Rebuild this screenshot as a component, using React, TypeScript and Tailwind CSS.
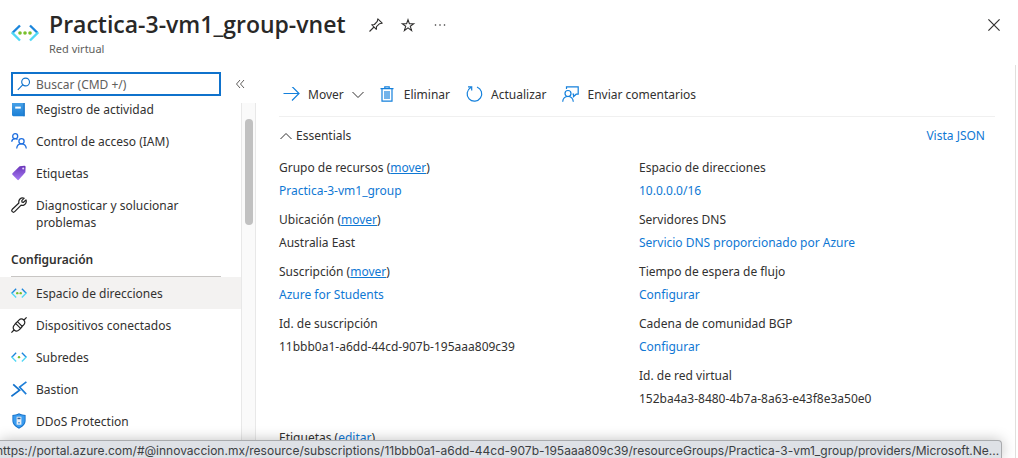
import React from "react";

type IconProps = { className?: string };

function VnetIcon({ className = "", dots = 3 }: IconProps & { dots?: number }) {
  const centres = dots === 3 ? [9, 14, 19] : dots === 2 ? [11, 17] : [14];
  return (
    <svg className={className} viewBox="0 0 28 18" fill="none" strokeWidth="2.4" aria-hidden="true">
      <path d="M9 1.5 1.300 9" stroke="#1b86dc" />
      <path d="m.8 8.400 8.200 8.100" stroke="#50d8f5" />
      <path d="M19 1.500 26.700 9" stroke="#1b86dc" />
      <path d="m27.200 8.400-8.200 8.100" stroke="#50d8f5" />
      {centres.map((cx) => (
        <circle key={cx} cx={cx} cy="9" r={dots === 3 ? 1.8 : 2.1} fill="#78c02c" />
      ))}
    </svg>
  );
}

function BookIcon() {
  return (
    <svg className="size-4" viewBox="0 0 16 16" aria-hidden="true">
      <defs>
        <linearGradient id="book" x1="0" y1="0" x2="0" y2="1">
          <stop offset="0" stopColor="#4aa3e8" />
          <stop offset="1" stopColor="#1b7fd6" />
        </linearGradient>
      </defs>
      <path d="M1 1h12.500v14.200H2.400A1.400 1.400 0 0 1 1 13.800z" fill="url(#book)" />
      <path d="M12.400 1h1.400v14.200h-1.400z" fill="#1f78c8" />
      <path d="M4.200 5.600h5.600v2H4.200z" fill="#fff" />
    </svg>
  );
}

function PeopleIcon() {
  return (
    <svg className="size-4" viewBox="0 0 16 16" fill="none" stroke="#1f6fe0" strokeWidth="1.3" aria-hidden="true">
      <circle cx="4.2" cy="3.200" r="2.500" />
      <path d="M.7 8.800C.9 7 2.300 5.700 4.200 5.700c.9 0 1.700.300 2.300.8" />
      <circle cx="10.500" cy="8.200" r="2.600" />
      <path d="M5.700 15.500c.200-2.800 2-4.700 4.700-4.700s4.600 1.900 4.900 4.700" />
    </svg>
  );
}

function TagIcon() {
  return (
    <svg className="size-4" viewBox="0 0 16 16" aria-hidden="true">
      <defs>
        <linearGradient id="tag" x1="0" y1="0" x2="0" y2="1">
          <stop offset="0" stopColor="#6a35b8" />
          <stop offset="1" stopColor="#a67af4" />
        </linearGradient>
      </defs>
      <path d="M8.600 1.200 13.400.800q1.200 0 1.200 1.200l-.200 5.200-6.600 7.600q-.700.700-1.400 0L1.500 9.700q-.600-.700 0-1.400z" fill="url(#tag)" />
      <circle cx="12.200" cy="3.400" r="1" fill="#e6d8fb" />
    </svg>
  );
}

function WrenchIcon() {
  return (
    <svg className="size-4" viewBox="0 0 16 16" fill="none" stroke="#222" strokeWidth="1.200" strokeLinejoin="round" aria-hidden="true">
      <path d="M13.200 1.200 10.800 3.600l.200 1.500 1.500.200 2.500-2.400c.8 2.300-.4 4.800-2.700 5.400-.800.200-1.500.100-2.200-.100L3.700 14.700c-.7.700-1.700.7-2.400 0s-.7-1.700 0-2.400l6.600-6.300c-.7-2.900 1.800-6.200 5.300-4.800z" />
    </svg>
  );
}

function PlugIcon() {
  return (
    <svg className="size-4" viewBox="0 0 16 16" fill="none" stroke="#222" strokeWidth="1.200" aria-hidden="true">
      <path d="M.4 15.600 3 13M13 3 15.600.4M4.600 6.400l5 5-1.500 1.500c-1.400 1.400-3.500 1.500-4.900.1s-1.300-3.500.1-4.900zM6.400 4.600l1.500-1.500c1.400-1.400 3.500-1.500 4.900-.1s1.300 3.500-.1 4.900l-1.500 1.500zM4.600 6.400l1.800-1.800M9.600 11.400l1.600-1.900" />
    </svg>
  );
}

function BastionIcon() {
  return (
    <svg className="size-4" viewBox="0 0 16 16" fill="none" aria-hidden="true">
      <path d="M.4 15.200 8.600 9.200 2.200 3.400" stroke="#1272cc" strokeWidth="1.700" />
      <path d="M15.400.9 8.600 6.200l6.600 7" stroke="#1f7fd8" strokeWidth="1.700" />
    </svg>
  );
}

function ShieldIcon() {
  return (
    <svg className="size-4" viewBox="0 0 16 16" aria-hidden="true">
      <path d="M8 .3c2.300 1.500 4.300 1.300 6.600 1.600v5.600c0 4-3.300 6.500-6.600 8.200C4.700 14 1.400 11.500 1.400 7.500V1.900C3.700 1.600 5.700 1.800 8 .3z" fill="#1671c8" />
      <path d="M8 1.300c2 1.200 3.700 1.200 5.700 1.400v4.800c0 3.400-2.800 5.600-5.700 7.100-2.900-1.500-5.700-3.700-5.700-7.100V2.700C4.300 2.500 6 2.500 8 1.300z" fill="#3a9cf0" />
      <path d="M5.600 3.700h4.800v8H5.600z" fill="#e8eef5" />
      <path d="M6.500 4.700h3v1.500h-3z" fill="#335f91" />
      <path d="M7.300 9h1.400v1.500H7.300z" fill="#3a8ada" />
    </svg>
  );
}

function Chevron({ up = false }: { up?: boolean }) {
  return (
    <svg className="h-2 w-3 shrink-0" viewBox="0 0 12 8" fill="none" stroke="#323130" strokeWidth="1" aria-hidden="true">
      <path d={up ? "M.500 7 6 1.500 11.500 7" : "M.500 1 6 6.500 11.500 1"} />
    </svg>
  );
}

function NavItem({ icon, label, active = false }: { icon: React.ReactNode; label: string; active?: boolean }) {
  return (
    <a
      href="#"
      aria-current={active ? "page" : undefined}
      className={`flex min-h-8 items-start pt-2 pr-12 pb-1 pl-[11px] leading-[17px] ${active ? "bg-[#f3f2f1]" : ""}`}
    >
      <span className="mr-[9px] flex size-4 shrink-0 items-center justify-center">{icon}</span>
      <span>{label}</span>
    </a>
  );
}

function Field({ label, action, value, plain = false }: { label: string; action?: string; value: string; plain?: boolean }) {
  return (
    <div className="mb-1.5 leading-[23px]">
      <dt>
        {label}
        {action && (
          <>
            {" ("}
            <a href="#" className="text-[#0f78d4] underline">
              {action}
            </a>
            )
          </>
        )}
      </dt>
      <dd>
        {plain ? value : <a href="#" className="text-[#0f78d4]">{value}</a>}
      </dd>
    </div>
  );
}

export default function App() {
  return (
    <div className="relative flex h-screen flex-col overflow-hidden bg-white font-['Noto_Sans',sans-serif] text-[12px] text-[#323130]">
      <header className="flex h-[65px] shrink-0 items-start pt-2 pl-[11px]">
        <VnetIcon className="mt-4 h-[18px] w-7 shrink-0" />
        <div className="ml-2.5">
          <h1 className="font-['Open_Sans',sans-serif] text-[23px] leading-8 font-semibold whitespace-nowrap text-[#292827]">Practica-3-vm1_group-vnet</h1>
          <p className="text-[11px] leading-[18px] text-[#605e5c]">Red virtual</p>
        </div>
        <div className="mt-[9px] ml-[22px] flex items-center gap-4">
          <button aria-label="Anclar" className="size-4">
            <svg className="size-4" viewBox="0 0 16 16" fill="none" stroke="#323130" strokeWidth="1.100" strokeLinejoin="round" aria-hidden="true">
              <path d="M1.500 14.500 6 10M3.700 7.700 8.300 12.300 8.500 9.600 11.600 6.700 14.200 6.200 9.800 1.800 9.300 4.400 6.400 7.500z" />
            </svg>
          </button>
          <button aria-label="Favorito" className="size-4">
            <svg className="size-4" viewBox="0 0 16 16" fill="none" stroke="#323130" strokeWidth="1.100" aria-hidden="true">
              <path d="m8 2.700 1.400 4h4.300l-3.400 2.600 1.300 4.200L8 10.900l-3.600 2.600 1.300-4.200-3.400-2.600h4.300z" />
            </svg>
          </button>
          <button aria-label="Más" className="size-4">
            <svg className="size-4" viewBox="0 0 16 16" fill="#323130" aria-hidden="true">
              <circle cx="3.500" cy="8" r=".8" />
              <circle cx="8" cy="8" r=".8" />
              <circle cx="12.500" cy="8" r=".8" />
            </svg>
          </button>
        </div>
        <button aria-label="Cerrar" className="mt-[11px] mr-[18px] ml-auto size-3">
          <svg className="size-3" viewBox="0 0 12 12" stroke="#323130" strokeWidth="1.200" aria-hidden="true">
            <path d="m.4.4 11.200 11.200M11.600.4.4 11.600" />
          </svg>
        </button>
      </header>

      <div className="flex min-h-0 flex-1">
        <aside className="flex w-64 shrink-0 flex-col">
          <div className="flex items-center pt-[7px] pb-[7px] pl-[11px]">
            <label className="flex h-6 w-[210px] items-center border-2 border-[#0f72cc] pl-1">
              <svg className="mr-[5px] size-3.5 shrink-0" viewBox="0 0 14 14" fill="none" stroke="#0f72cc" strokeWidth="1.100" aria-hidden="true">
                <circle cx="8.600" cy="5" r="3.900" />
                <path d="M5.700 7.900.800 12.800" />
              </svg>
              <input aria-label="Buscar" placeholder="Buscar (CMD +/)" className="w-full min-w-0 pt-px outline-none placeholder:text-[#605e5c]" />
            </label>
            <button aria-label="Contraer menú" className="ml-3.5 h-3 w-3">
              <svg className="h-3 w-3" viewBox="0 0 12 12" fill="none" stroke="#605e5c" strokeWidth="1" aria-hidden="true">
                <path d="M5 2 1.500 6 5 10M9 2 5.500 6 9 10" />
              </svg>
            </button>
          </div>
          <div className="flex min-h-0 flex-1">
            <nav className="min-w-0 flex-1 overflow-hidden">
              <div className="-mt-2.5">
                <NavItem icon={<BookIcon />} label="Registro de actividad" />
                <NavItem icon={<PeopleIcon />} label="Control de acceso (IAM)" />
                <NavItem icon={<TagIcon />} label="Etiquetas" />
                <NavItem icon={<WrenchIcon />} label="Diagnosticar y solucionar problemas" />
                <h2 className="mt-2 mr-5 ml-[11px] border-b border-[#c8c6c4] pt-2 pb-2 leading-[17px] font-semibold">Configuración</h2>
                <NavItem icon={<VnetIcon dots={2} className="w-4" />} label="Espacio de direcciones" active />
                <NavItem icon={<PlugIcon />} label="Dispositivos conectados" />
                <NavItem icon={<VnetIcon dots={1} className="w-4" />} label="Subredes" />
                <NavItem icon={<BastionIcon />} label="Bastion" />
                <NavItem icon={<ShieldIcon />} label="DDoS Protection" />
              </div>
            </nav>
            <div className="w-[15px] shrink-0 border-x border-[#e8e8e8] bg-[#fafafa] px-[3px] pt-4">
              <div className="h-[106px] w-2 rounded-full bg-[#c1c1c1]" />
            </div>
          </div>
        </aside>

        <main className="mr-0.5 min-w-0 flex-1 border-r border-[#e1dfdd] pl-[23px]">
          <div className="mr-5 flex h-[52px] items-center border-b border-[#f0f0f0] pt-2 pl-1">
            <button className="flex items-center">
              <svg className="mr-2 h-4 w-[17px]" viewBox="0 0 17 16" fill="none" stroke="#1480dc" strokeWidth="1.200" aria-hidden="true">
                <path d="M.5 6.500H16M9-.5l7 7-7 7" />
              </svg>
              <span className="mr-2">Mover</span>
              <Chevron />
            </button>
            <button className="ml-4 flex items-center">
              <svg className="mr-2.5 h-4 w-3.5" viewBox="0 0 14 16" fill="none" stroke="#1480dc" strokeWidth="1.200" overflow="visible" aria-hidden="true">
                <path d="M.5 1.600h13M4.800 1.400V-.2h4.400v1.600M2 1.800v12.400h10V1.800M5 4v8M7 4v8M9 4v8" />
              </svg>
              Eliminar
            </button>
            <button className="ml-4 flex items-center">
              <svg className="mr-2 h-4 w-[17px]" viewBox="0 0 17 16" fill="none" stroke="#1480dc" strokeWidth="1.200" overflow="visible" aria-hidden="true">
                <path d="M11 0A7.300 7.300 0 1 1 4.800.500M2-.2h3.700v3.700" />
              </svg>
              Actualizar
            </button>
            <button className="ml-4 flex items-center">
              <svg className="mr-2 h-4 w-[17px]" viewBox="0 0 17 16" fill="none" stroke="#1480dc" strokeWidth="1.200" overflow="visible" aria-hidden="true">
                <circle cx="6" cy="6.500" r="3" />
                <path d="M.7 14.700c.2-3 2.200-5.200 5.300-5.200s5 2.200 5.300 5.200M4.500 2V-.2h11.700v7.400h-2L11.500 9.600V7.200h-1" />
              </svg>
              Enviar comentarios
            </button>
          </div>

          <div className="mr-[30px] flex h-[39px] items-center justify-between pb-0.5">
            <button className="flex items-center gap-1 pl-px">
              <Chevron up />
              Essentials
            </button>
            <a href="#" className="text-[#0f78d4]">Vista JSON</a>
          </div>

          <div className="mr-4 grid grid-cols-2">
            <dl>
              <Field label="Grupo de recursos" action="mover" value="Practica-3-vm1_group" />
              <Field label="Ubicación" action="mover" value="Australia East" plain />
              <Field label="Suscripción" action="mover" value="Azure for Students" />
              <Field label="Id. de suscripción" value="11bbb0a1-a6dd-44cd-907b-195aaa809c39" plain />
            </dl>
            <dl>
              <Field label="Espacio de direcciones" value="10.0.0.0/16" />
              <Field label="Servidores DNS" value="Servicio DNS proporcionado por Azure" />
              <Field label="Tiempo de espera de flujo" value="Configurar" />
              <Field label="Cadena de comunidad BGP" value="Configurar" />
              <Field label="Id. de red virtual" value="152ba4a3-8480-4b7a-8a63-e43f8e3a50e0" plain />
            </dl>
          </div>
          <p className="mt-2.5 leading-[23px]">
            Etiquetas (
            <a href="#" className="text-[#0f78d4] underline">editar</a>)
          </p>
        </main>
      </div>

      <div className="absolute bottom-0 left-0 mr-4 h-[18px] max-w-full overflow-hidden rounded-tr border-t border-r border-[#a9abae] bg-[#dee1e6] pr-0.5 font-[Inter,sans-serif] text-[12px] leading-[19px] whitespace-nowrap text-[#3c4043] shadow-[0_0_14px_rgba(0,0,0,0.25)]">
        <span className="-ml-1">https://portal.azure.com/#@innovaccion.mx/resource/subscriptions/11bbb0a1-a6dd-44cd-907b-195aaa809c39/resourceGroups/Practica-3-vm1_group/providers/Microsoft.Ne...</span>
      </div>
    </div>
  );
}
